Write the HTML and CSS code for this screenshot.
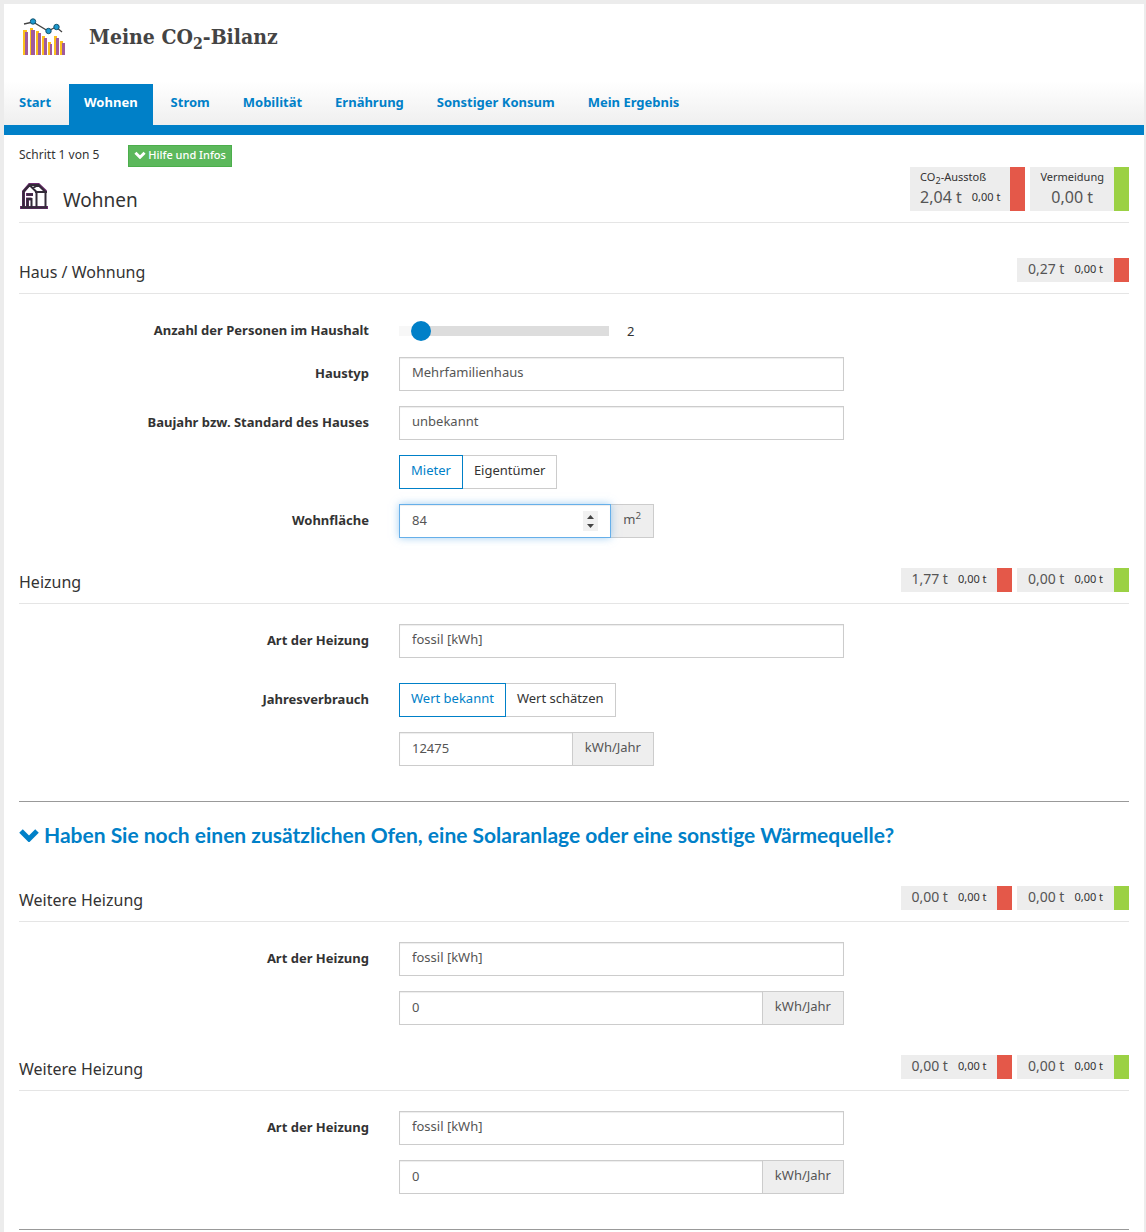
FILE: index.html
```html
<!DOCTYPE html>
<html lang="de">
<head>
<meta charset="utf-8">
<meta name="viewport" content="width=device-width, initial-scale=1">
<title>Meine CO2-Bilanz</title>
<link rel="stylesheet" href="styles.css">
</head>
<body>
<div class="page">
  <header class="header">
    <div class="brand">
      <svg class="brand-icon" viewBox="0 0 42 38" aria-hidden="true">
        <g fill="#fcc01c"><path d="M0 12h4v25H0zM7 10h3v27H7zM13 13h3v24h-3zM19 18h3v19h-3zM25 24h3v13h-3zM31 18h3v19h-3zM37 23h3v14h-3z"/></g>
        <g fill="#a05a9c"><path d="M2 14h3v23H2zM8 12h4v25H8zM15 15h3v22h-3zM21 20h3v17h-3zM27 26h2v11h-2zM33 20h3v17h-3zM39 25h3v12h-3z"/></g>
        <path d="M1 6l9-2 15 9 8-4 6 5" fill="none" stroke="#444" stroke-width="1.300"/>
        <g fill="#1c9ad0" stroke="#14536e" stroke-width="1"><circle cx="10" cy="3.500" r="2.700"/><circle cx="25.500" cy="13" r="2.700"/><circle cx="33.500" cy="9" r="2.700"/></g>
      </svg>
      <h1 class="title">Meine CO<sub>2</sub>-Bilanz</h1>
    </div>
    <nav class="nav">
      <a href="#">Start</a>
      <a href="#" class="active" aria-current="page">Wohnen</a>
      <a href="#">Strom</a>
      <a href="#">Mobilität</a>
      <a href="#">Ernährung</a>
      <a href="#">Sonstiger Konsum</a>
      <a href="#">Mein Ergebnis</a>
    </nav>
  </header>

  <main class="content">
    <div class="step-head">
      <div class="step-main">
        <div class="step-line">
          <span>Schritt 1 von 5</span>
          <button type="button" class="help"><svg class="chevron" viewBox="0 0 20 14" aria-hidden="true"><path d="M2 3l8 8 8-8" fill="none" stroke="currentColor" stroke-width="5"/></svg>Hilfe und Infos</button>
        </div>
        <div class="step-title">
          <svg class="house" viewBox="0 0 28 26" aria-hidden="true">
            <g fill="none" stroke="#6d2b70" stroke-width="3"><path d="M0 24.500h28M3.500 24V8.500L9.500 1.500h9L26 8.500M6 11.500h7M7.500 24v-8h4"/></g>
            <g fill="none" stroke="#332b38" stroke-width="2"><path d="M1 24.500h26M3.500 24V8.500L9.500 2h9l7 7V24M9.500 2l7 7v15M18 2l-5 3M15 9h12M7.500 24v-8h4v8M7 11.500h6"/></g>
          </svg>
          <h2>Wohnen</h2>
        </div>
      </div>
      <div class="badges">
        <div class="total co2"><span class="caption">CO<sub>2</sub>-Ausstoß</span><span class="values"><b>2,04 t</b><small>0,00 t</small></span></div>
        <div class="total saved"><span class="caption">Vermeidung</span><span class="values"><b>0,00 t</b></span></div>
      </div>
    </div>

    <section class="group">
      <div class="group-head">
        <h3>Haus / Wohnung</h3>
        <div class="badges"><div class="badge co2"><b>0,27 t</b><small>0,00 t</small></div></div>
      </div>
      <div class="row compact">
        <label for="persons">Anzahl der Personen im Haushalt</label>
        <div class="field slider"><input type="range" id="persons" min="1" max="17" value="2"><output for="persons">2</output></div>
      </div>
      <div class="row">
        <label for="type">Haustyp</label>
        <div class="field"><select id="type" class="control"><option>Mehrfamilienhaus</option></select></div>
      </div>
      <div class="row">
        <label for="year">Baujahr bzw. Standard des Hauses</label>
        <div class="field"><select id="year" class="control"><option>unbekannt</option></select></div>
      </div>
      <div class="row">
        <span></span>
        <div class="field toggle"><button type="button" class="on" aria-pressed="true">Mieter</button><button type="button" aria-pressed="false">Eigentümer</button></div>
      </div>
      <div class="row narrow">
        <label for="area">Wohnfläche</label>
        <div class="field input-group">
          <div class="number"><input type="number" id="area" class="control focused" value="84"><svg class="stepper" viewBox="0 0 15 20" aria-hidden="true"><path fill="#f1f1f1" d="M0 0h15v20H0z"/><path fill="#444" d="M4 8l3.500-4L11 8zM4 13l3.500 4 3.500-4z"/></svg></div>
          <span class="unit">m<sup>2</sup></span>
        </div>
      </div>
    </section>

    <section class="group">
      <div class="group-head">
        <h3>Heizung</h3>
        <div class="badges"><div class="badge co2"><b>1,77 t</b><small>0,00 t</small></div><div class="badge saved"><b>0,00 t</b><small>0,00 t</small></div></div>
      </div>
      <div class="row spaced">
        <label for="heat1">Art der Heizung</label>
        <div class="field"><select id="heat1" class="control"><option>fossil [kWh]</option></select></div>
      </div>
      <div class="row">
        <label for="use1">Jahresverbrauch</label>
        <div class="field toggle"><button type="button" class="on" aria-pressed="true">Wert bekannt</button><button type="button" aria-pressed="false">Wert schätzen</button></div>
      </div>
      <div class="row narrow">
        <span></span>
        <div class="field input-group"><div class="number"><input type="number" id="use1" class="control" value="12475"></div><span class="unit">kWh/Jahr</span></div>
      </div>
    </section>

    <h3 class="more"><a href="#more"><svg class="chevron" viewBox="0 0 20 14" aria-hidden="true"><path d="M2 3l8 8 8-8" fill="none" stroke="currentColor" stroke-width="5"/></svg>Haben Sie noch einen zusätzlichen Ofen, eine Solaranlage oder eine sonstige Wärmequelle?</a></h3>

    <section class="group" id="more">
      <div class="group-head">
        <h3>Weitere Heizung</h3>
        <div class="badges"><div class="badge co2"><b>0,00 t</b><small>0,00 t</small></div><div class="badge saved"><b>0,00 t</b><small>0,00 t</small></div></div>
      </div>
      <div class="row">
        <label for="heat2">Art der Heizung</label>
        <div class="field"><select id="heat2" class="control"><option>fossil [kWh]</option></select></div>
      </div>
      <div class="row">
        <span></span>
        <div class="field input-group"><div class="number"><input type="number" aria-label="Jahresverbrauch" class="control" value="0"></div><span class="unit">kWh/Jahr</span></div>
      </div>
    </section>

    <section class="group">
      <div class="group-head">
        <h3>Weitere Heizung</h3>
        <div class="badges"><div class="badge co2"><b>0,00 t</b><small>0,00 t</small></div><div class="badge saved"><b>0,00 t</b><small>0,00 t</small></div></div>
      </div>
      <div class="row">
        <label for="heat3">Art der Heizung</label>
        <div class="field"><select id="heat3" class="control"><option>fossil [kWh]</option></select></div>
      </div>
      <div class="row">
        <span></span>
        <div class="field input-group"><div class="number"><input type="number" aria-label="Jahresverbrauch" class="control" value="0"></div><span class="unit">kWh/Jahr</span></div>
      </div>
    </section>
    <hr class="rule">
  </main>
</div>
</body>
</html>
```
FILE: styles.css
```css
* { box-sizing: border-box; }
body {
  margin: 0;
  padding: 4px 2px 0 4px;
  background: #ececec;
  color: #333;
  font: 13px/20px "Noto Sans", "Open Sans", sans-serif;
}
h1, h2, h3 { margin: 0; font-weight: 400; }
a { color: #0080c8; text-decoration: none; }
button, input, select { font: inherit; color: inherit; border-radius: 0; }
sub, sup { line-height: 0; }
.page { background: #fff; min-height: calc(100vh - 4px); }

/* Header */
.header {
  border-bottom: 10px solid #0080c8;
  background: linear-gradient(#fff, #efefef) bottom / 100% 44px no-repeat;
}
.brand { display: flex; align-items: center; gap: 24px; height: 80px; padding: 0 19px 14px; }
.brand-icon { width: 42px; height: 38px; }
.title { font: bold 21px/32px "DejaVu Serif Condensed", "DejaVu Serif", serif; color: #444; }
.title sub { font-size: 75%; }
.nav { display: flex; gap: 3px; }
.nav a { padding: 8px 15px 13px; font-weight: 700; line-height: 20px; }
.nav .active { background: #0080c8; color: #fff; }

/* Page head */
.content { padding: 10px 15px 0; }
.step-head { display: flex; justify-content: space-between; align-items: flex-end; padding-bottom: 11px; border-bottom: 1px solid #e5e5e5; }
.step-line { display: flex; align-items: center; gap: 29px; height: 20px; margin-bottom: 2px; font-size: 12px; }
.help { display: flex; align-items: center; gap: 2px; height: 22px; margin-top: 2px; padding: 0 5px 2px; border: 1px solid #4cae4c; background: #5cb85c; color: #fff; font-size: 11px; font-weight: 500; }
.help .chevron { width: 12px; height: 8px; }
.step-title { display: flex; align-items: flex-end; gap: 14px; height: 44px; }
.step-title h2 { font-size: 19px; line-height: 22px; }
.house { width: 28px; height: 26px; margin: 0 1px 2px; }

/* Result badges */
.badges { display: flex; gap: 5px; }
.badge, .total { background: #ededed; border-right: 15px solid #e45849; color: #333; }
.saved { border-right-color: #9bd144; }
.badge { display: flex; align-items: center; justify-content: center; gap: 10px; min-width: 111px; height: 24px; padding-bottom: 3px; }
.badge.saved, .badge:only-child { min-width: 112px; }
.badges b { font-weight: 400; font-size: 14px; color: #555; }
.badges small { font-size: 11px; }
.total { display: flex; flex-direction: column; padding: 0 10px; height: 44px; }
.total .caption { font-size: 11px; line-height: 20px; }
.total .values { display: flex; align-items: center; justify-content: center; gap: 10px; line-height: 20px; }
.badges .total b { font-size: 16px; }

/* Form groups */
.group { padding-bottom: 15px; }
.step-head + .group { padding-top: 35px; }
.group-head { display: flex; justify-content: space-between; align-items: center; height: 36px; padding-bottom: 11px; margin-bottom: 20px; border-bottom: 1px solid #e5e5e5; }
.group-head h3 { font-size: 16px; line-height: 24px; padding-top: 4px; }
.row { display: grid; grid-template-columns: 4fr 5fr 3fr; margin: 0 -15px 15px; }
.row.narrow { grid-template-columns: 4fr 3fr 5fr; }
.row.compact { margin-bottom: 9px; }
.row.spaced { margin-bottom: 25px; }
.row > * { padding: 0 15px; }
.row label { text-align: right; font-weight: 700; line-height: 32px; }
.control {
  display: block;
  width: 100%;
  height: 34px;
  margin: 0;
  padding: 0 12px 2px;
  border: 1px solid #ccc;
  background: #fff;
  box-shadow: inset 0 1px 1px rgba(0, 0, 0, .075);
  color: #555;
  appearance: none;
  outline: 0;
}
select.control { padding-bottom: 4px; }
input[type="number"] { appearance: textfield; }
input[type="number"]::-webkit-inner-spin-button { display: none; }
.focused { border-color: #66afe9; box-shadow: inset 0 1px 1px rgba(0, 0, 0, .075), 0 0 8px rgba(102, 175, 233, .6); }
.input-group { display: flex; }
.number { position: relative; flex: 1; min-width: 0; }
.stepper { position: absolute; top: 7px; right: 13px; width: 15px; height: 20px; }
.unit { padding: 4px 12px; border: 1px solid #ccc; border-left: 0; background: #eee; color: #555; }
.unit sup { font-size: 75%; }
.toggle { display: flex; }
.toggle button { height: 34px; padding: 0 11px 4px; border: 1px solid #ccc; border-left: 0; background: #fff; }
.toggle .on { border: 1px solid #0080c8; color: #0080c8; }

/* Slider */
.slider { display: flex; align-items: center; gap: 18px; height: 34px; }
.slider input { width: 210px; height: 20px; margin: 0; appearance: none; background: linear-gradient(90deg, #f7f7f7 22px, #ddd 22px) center / 100% 10px no-repeat; }
.slider input::-webkit-slider-thumb { appearance: none; width: 20px; height: 20px; border-radius: 50%; background: #0080c8; }

/* Additional heat sources */
.more { margin: 5px 0 36px; padding-top: 18px; border-top: 1px solid #999; font: 700 21px/30px Lato, "Noto Sans", sans-serif; font-variant-ligatures: none; }
.more a { display: flex; align-items: center; gap: 5px; }
.more .chevron { width: 20px; height: 14px; flex: none; }
.rule { margin: 5px 0 0; border: 0; border-top: 1px solid #999; }
```
